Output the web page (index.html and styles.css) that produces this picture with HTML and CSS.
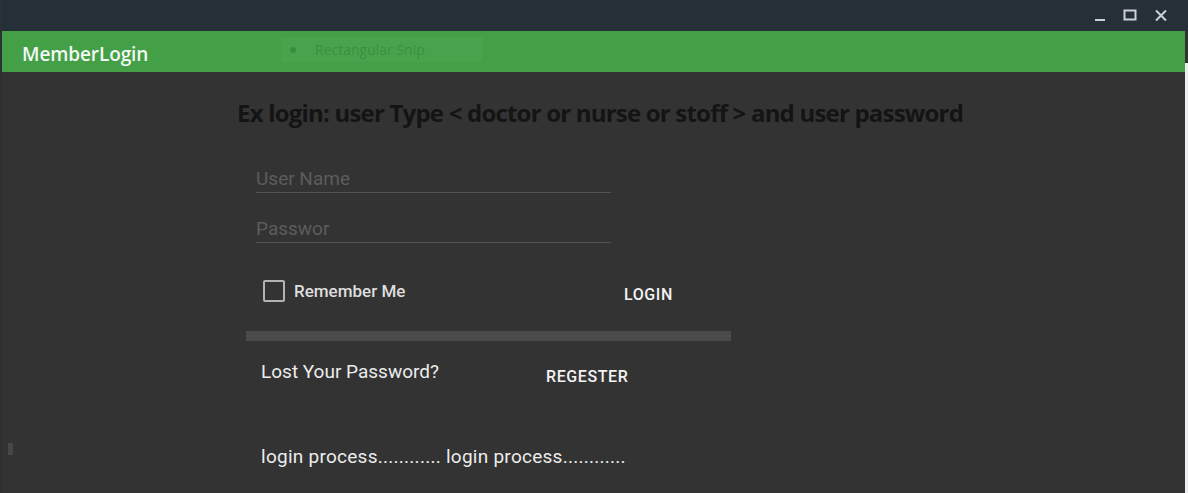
FILE: index.html
```html
<!DOCTYPE html>
<html>
<head>
<meta charset="utf-8">
<link rel="stylesheet" href="styles.css">
</head>
<body>
<div class="window">
  <div class="titlebar">
    <div class="controls">
      <svg class="ctl" width="14" height="14" viewBox="0 0 14 14"><rect x="3" y="10" width="10" height="2" fill="#cdd0d4"/></svg>
      <svg class="ctl" width="14" height="14" viewBox="0 0 14 14"><rect x="1.5" y="1.5" width="11" height="9" fill="none" stroke="#cdd0d4" stroke-width="2"/></svg>
      <svg class="ctl" width="14" height="14" viewBox="0 0 14 14"><path d="M2 1.5 L12 11.5 M12 1.5 L2 11.5" stroke="#cdd0d4" stroke-width="2"/></svg>
    </div>
  </div>
  <div class="appbar">
    <span class="apptitle">MemberLogin</span>
    <div class="snip"><span class="snipdot"></span><span class="sniptext">Rectangular Snip</span></div>
  </div>
  <div class="content">
    <h1 class="hint">Ex login: user Type &lt; doctor or nurse or stoff &gt; and user password</h1>
    <div class="form">
      <div class="field field-user"><span class="ph">User Name</span></div>
      <div class="field field-pass"><span class="ph">Passwor</span></div>
      <div class="row row-login">
        <label class="remember"><span class="box"></span><span>Remember Me</span></label>
        <span class="btn btn-login">LOGIN</span>
      </div>
      <div class="progress"></div>
      <div class="row row-lost">
        <span class="lost">Lost Your Password?</span>
        <span class="btn btn-reg">REGESTER</span>
      </div>
      <div class="status">login process............ login process............</div>
    </div>
    <span class="grip"></span>
  </div>
  <div class="edge"></div>
</div>
</body>
</html>
```
FILE: styles.css
```css
html, body {
  margin: 0;
  padding: 0;
  width: 1188px;
  height: 493px;
  overflow: hidden;
  background: #333333;
}
.window {
  position: relative;
  width: 1188px;
  height: 493px;
  display: flex;
  flex-direction: column;
  background: #333333;
  border-left: 2px solid #2b3035;
  box-sizing: border-box;
}
.titlebar {
  height: 31px;
  flex: none;
  background: #252f38;
  display: flex;
  justify-content: flex-end;
  align-items: flex-start;
  padding-right: 20px;
}
.controls {
  display: flex;
  gap: 17px;
  padding-top: 9px;
}
.ctl { display: block; }
.appbar {
  position: relative;
  height: 41px;
  flex: none;
  background: #43a047;
  display: flex;
  align-items: flex-start;
  padding-left: 20px;
  padding-top: 10px;
  box-sizing: border-box;
  margin-right: 3px;
}
.apptitle {
  font-family: "Open Sans", "Noto Sans", sans-serif;
  font-size: 19px;
  font-weight: 600;
  line-height: 26px;
  letter-spacing: -0.1px;
  color: #f4f8f4;
}
.snip {
  position: absolute;
  left: 279px;
  top: 6px;
  width: 202px;
  height: 25px;
  background: #48a44c;
  display: flex;
  align-items: center;
}
.snipdot {
  width: 6px;
  height: 6px;
  border-radius: 50%;
  background: #3a8c3e;
  margin-left: 9px;
}
.sniptext {
  font-family: "Open Sans", sans-serif;
  font-size: 14px;
  color: #3c8f40;
  margin-left: 19px;
}
.content {
  position: relative;
  flex: 1;
  margin-right: 4px;
  background: #333333;
  padding-left: 235px;
}
.edge {
  position: absolute;
  right: 0;
  top: 63px;
  width: 3px;
  bottom: 0;
  background: #eeeef2;
}
.hint {
  margin: 25px 0 0 0;
  font-family: "Open Sans", sans-serif;
  font-weight: bold;
  font-size: 24px;
  line-height: 32px;
  color: #141414;
  letter-spacing: -0.8px;
  white-space: nowrap;
}
.form {
  width: 485px;
  margin-left: 9px;
  display: flex;
  flex-direction: column;
  font-family: Roboto, sans-serif;
}
.field {
  margin-left: 10px;
  width: 355px;
  font-size: 19px;
  line-height: 22px;
  padding-bottom: 2px;
  border-bottom: 1px solid #525252;
}
.field-user { margin-top: 39px; }
.field-pass { margin-top: 25px; }
.ph {
  color: #5c5c5c;
}
.row {
  display: flex;
  align-items: flex-start;
  height: 24px;
}
.row-login {
  margin-top: 36px;
  padding-left: 17px;
}
.remember {
  display: flex;
  align-items: flex-start;
  gap: 9px;
  width: 361px;
  font-size: 17px;
  line-height: 24px;
  font-weight: 500;
  color: #dedede;
}
.box {
  width: 18px;
  height: 18px;
  margin-top: 1px;
  border: 2px solid #b3b3b3;
  border-radius: 2px;
}
.btn {
  font-size: 16px;
  line-height: 24px;
  font-weight: 500;
  color: #f2f2f2;
  letter-spacing: 0.6px;
}
.btn-login { margin-top: 4px; }
.progress {
  margin-top: 28px;
  height: 10px;
  width: 485px;
  background: #4b4b4b;
}
.row-lost {
  margin-top: 19px;
  padding-left: 15px;
}
.lost {
  width: 285px;
  font-size: 19px;
  line-height: 24px;
  color: #ececec;
}
.btn-reg { margin-top: 5px; }
.status {
  margin-top: 61px;
  padding-left: 15px;
  font-size: 19px;
  line-height: 24px;
  letter-spacing: 0.26px;
  color: #ececec;
  white-space: nowrap;
}
.grip {
  position: absolute;
  left: 6px;
  top: 371px;
  width: 5px;
  height: 12px;
  background: #474747;
}
```
